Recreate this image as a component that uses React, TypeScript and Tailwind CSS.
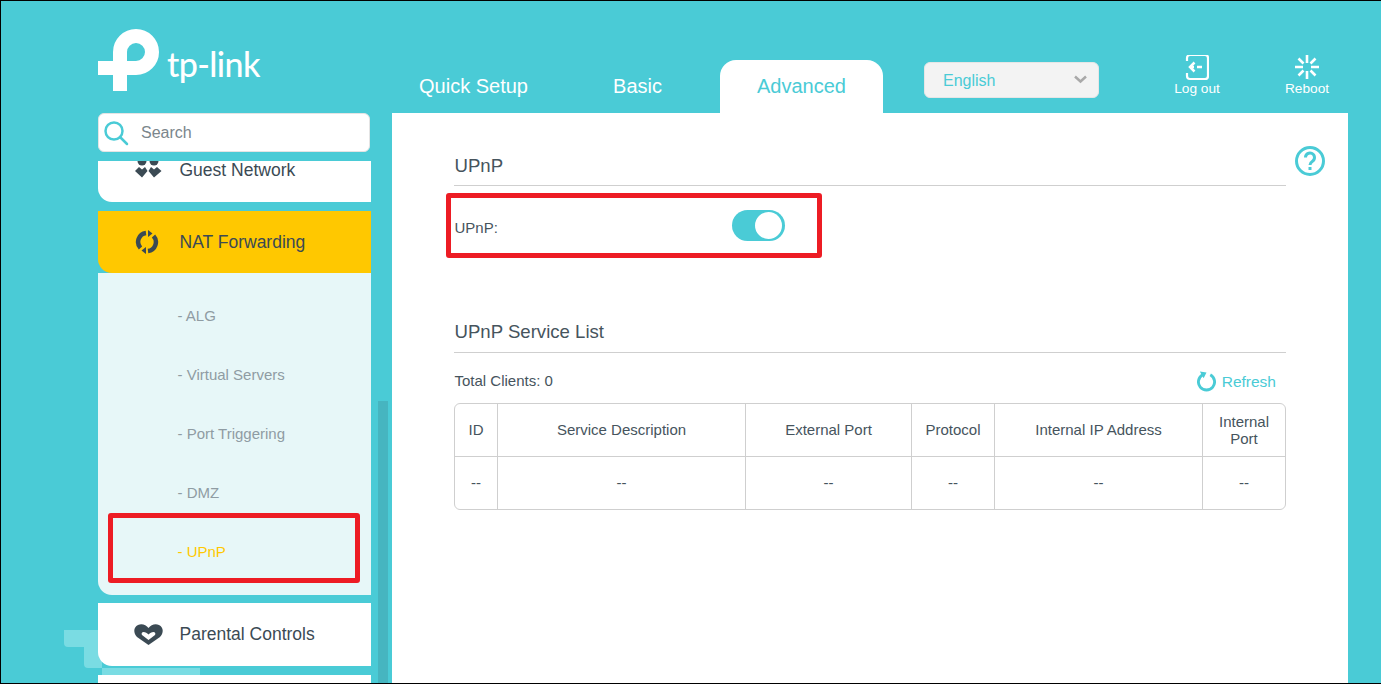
const font = { fontFamily: '"Liberation Sans", Arial, sans-serif' };

const Logo = () => (
  <div className="flex h-[112px] w-[293px] shrink-0 items-start pt-[27px]">
    <svg width="64" height="64" viewBox="98 28 64 64" fill="none" className="shrink-0">
      <path d="M120 91V52A16 16 0 1 1 136 68H98" stroke="#fff" strokeWidth="14" />
    </svg>
    <span className="mt-[16px] ml-[5px] text-[34px] leading-[40px] font-medium tracking-[-0.6px] text-white" style={{ fontFamily: 'Lato, sans-serif' }}>
      tp-link
    </span>
  </div>
);

const GuestIcon = () => (
  <svg width="28" height="17" viewBox="0 0 28 17" fill="#3b4a54">
    <circle cx="8" cy="0" r="4.500" />
    <circle cx="20" cy="0" r="4.500" />
    <path d="M1 10 5 6 8 8.500 11 6l2.500 4L8 16.500zM14.500 10 17 6l3 2.500L23 6l4.500 4-7.500 6.500z" />
  </svg>
);

const NatIcon = () => (
  <svg width="24" height="24" viewBox="0 0 24 24" fill="none" stroke="#3b4a54" strokeWidth="4.500">
    <path d="M5.500 18A9 9 0 0 1 11 3" />
    <path d="M18.500 6A9 9 0 0 1 13 21" />
    <path d="M13 0l4.500 3.500L13 7z" fill="#3b4a54" stroke="none" />
    <path d="M11 24l-4.500-3.500L11 17z" fill="#3b4a54" stroke="none" />
  </svg>
);

const HeartIcon = () => (
  <svg width="29" height="21" viewBox="0 0 29 21">
    <path d="M14.500 21 3 13C-1 9-.5 3 4 1c4-1.800 8 0 10.500 3C17 1 21-.8 25 1c4.500 2 5 8 1 12z" fill="#3b4a54" />
    <path d="M14.500 16 8 11c-1-1.500 0-3 1.500-3 2 0 3.500 1 5 2.500C16 9 17.500 8 19.500 8 21 8 22 9.500 21 11z" fill="#fff" />
  </svg>
);

const Sidebar = () => (
  <div className="relative z-10 flex w-[273px] flex-col">
    <div className="flex h-[39px] w-[272px] items-center rounded-md border border-[#e4e4e4] bg-white">
      <svg width="26" height="26" viewBox="0 0 26 26" fill="none" stroke="#4acbd6" strokeWidth="2.500" className="ml-[4px]">
        <circle cx="11" cy="11" r="8.500" />
        <path d="M17 17l7 7" strokeLinecap="round" />
      </svg>
      <span className="ml-[12px] text-[16px] text-[#7b868c]">Search</span>
    </div>
    <div className="mt-[9px] flex h-[41px] items-start overflow-hidden rounded-bl-[14px] bg-white text-[17.500px] leading-[18px] text-[#3b4a54]">
      <span className="ml-[36px] w-[45.500px]"><GuestIcon /></span>
      <span>Guest Network</span>
    </div>
    <div className="mt-[9px] flex h-[62px] items-center rounded-bl-[14px] bg-[#ffc800] text-[17.500px] text-[#3b4a54]">
      <span className="ml-[37px] flex w-[44.500px]"><NatIcon /></span>
      <span>NAT Forwarding</span>
    </div>
    <div className="flex h-[322px] flex-col rounded-bl-[14px] bg-[#e7f7f8] pt-[14px] pl-[79.500px] text-[15px] text-[#8f9ca3]">
      <div className="flex h-[59px] items-center">- ALG</div>
      <div className="flex h-[59px] items-center">- Virtual Servers</div>
      <div className="flex h-[59px] items-center">- Port Triggering</div>
      <div className="flex h-[59px] items-center">- DMZ</div>
      <div className="flex h-[58px] items-center text-[#ffc800]">- UPnP</div>
    </div>
    <div className="mt-[8px] flex h-[63px] items-center rounded-bl-[14px] bg-white text-[17.500px] text-[#3b4a54]">
      <span className="ml-[36px] flex w-[45.500px]"><HeartIcon /></span>
      <span>Parental Controls</span>
    </div>
    <div className="mt-[9px] h-[20px] bg-white" />
    <div className="absolute top-[288px] left-[280px] h-[290px] w-[10px] bg-[#46b5c0]" />
    <div className="absolute top-[400px] left-[10px] h-[70px] w-[252px] rounded-[3px] border-[5px] border-[#ed1c24]" />
  </div>
);

const Tabs = () => (
  <div className="flex h-[112px] items-end">
    <div className="flex h-[53px] w-[163px] items-center justify-center text-[20px] text-white">Quick Setup</div>
    <div className="flex h-[53px] w-[165px] items-center justify-center text-[20px] text-white">Basic</div>
    <div className="flex h-[53px] w-[163px] items-center justify-center rounded-t-[16px] bg-white text-[20px] text-[#4acbd6]">Advanced</div>
    <div className="mb-[15px] ml-[41px] flex h-[36px] w-[175px] items-center justify-between rounded-md border border-[#e6e6e6] bg-[#f3f3f3] pr-[11px] pl-[18px] text-[16px] text-[#4acbd6]">
      <span className="pt-[3px]">English</span>
      <svg width="13" height="9" viewBox="0 0 13 9" fill="none" stroke="#a9a9a9" strokeWidth="2.500">
        <path d="M1 1.500l5.500 5 5.500-5" />
      </svg>
    </div>
    <div className="mb-[16px] ml-[75px] flex w-[46px] flex-col items-center text-[13.700px] leading-[16px] whitespace-nowrap text-white">
      <svg width="24" height="26" viewBox="0 1 24 26" fill="none" stroke="#fff" strokeWidth="2.200">
        <path d="M2 7V4a3 3 0 0 1 3-3h15a3 3 0 0 1 3 3v18a3 3 0 0 1-3 3H5a3 3 0 0 1-3-3v-3" />
        <path d="M9.500 8.500 5 13l4.500 4.500" strokeWidth="2.500" />
        <path d="M6 13h3M12 13h5" strokeWidth="2.500" />
      </svg>
      Log out
    </div>
    <div className="mb-[16px] ml-[64px] flex w-[46px] flex-col items-center text-[13.700px] leading-[16px] whitespace-nowrap text-white">
      <svg width="26" height="26" viewBox="0 1 26 26" fill="none" stroke="#fff" strokeWidth="2.600">
        <path d="M13 1v8M13 17v8M1 13h8M17 13h8M4.500 4.500l5 5M16.500 16.500l5 5M21.500 4.500l-5 5M9.500 16.500l-5 5" />
      </svg>
      Reboot
    </div>
  </div>
);

const columns = [
  { label: 'ID', width: 'w-[43px]' },
  { label: 'Service Description', width: 'w-[248px]' },
  { label: 'External Port', width: 'w-[166px]' },
  { label: 'Protocol', width: 'w-[83px]' },
  { label: 'Internal IP Address', width: 'w-[208px]' },
  { label: 'Internal Port', width: 'w-[82px]' },
];

const ServiceTable = () => (
  <div className="mt-[12px] overflow-hidden rounded-md border border-[#cfcfcf] text-[15px] text-[#46545d]">
    <div className="flex h-[53px] border-b border-[#cfcfcf]">
      {columns.map((c, i) => (
        <div key={c.label} className={`flex items-center justify-center px-[8px] text-center leading-[17px] ${c.width} ${i < 5 ? 'border-r border-[#cfcfcf]' : ''}`}>
          {c.label}
        </div>
      ))}
    </div>
    <div className="flex h-[52px]">
      {columns.map((c, i) => (
        <div key={c.label} className={`flex items-center justify-center ${c.width} ${i < 5 ? 'border-r border-[#cfcfcf]' : ''}`}>
          --
        </div>
      ))}
    </div>
  </div>
);

const Main = () => (
  <div className="relative h-[571px] w-[956px] bg-white pt-[41px] pl-[62px] text-[#46545d]">
    <div className="w-[832px]">
      <div className="border-b border-[#cfcfcf] pb-[7px] pl-[0.500px] text-[18.600px] leading-[24px]">UPnP</div>
      <div className="relative mt-[24px] flex h-[32px] items-center pl-[0.500px] text-[15px]">
        <span className="w-[277.500px] pt-[5px]">UPnP:</span>
        <div className="flex h-[31px] w-[53px] items-center justify-end rounded-full bg-[#4acbd6] pr-[3px]">
          <div className="h-[27px] w-[27px] rounded-full bg-white" />
        </div>
        <div className="absolute top-[-17px] left-[-8px] h-[65px] w-[376px] rounded-[3px] border-[5px] border-[#ed1c24]" />
      </div>
      <div className="mt-[78px] border-b border-[#cfcfcf] pb-[8px] pl-[0.500px] text-[18.600px] leading-[24px]">UPnP Service List</div>
      <div className="mt-[18px] flex h-[20px] items-center justify-between pr-[10px] pl-[0.500px] text-[15px]">
        Total Clients: 0
        <span className="flex items-center text-[15.500px] text-[#4acbd6]">
          <svg width="19" height="22" viewBox="0 0 20 22" fill="none" stroke="#4acbd6" strokeWidth="3" className="mr-[6px]">
            <path d="M6 4.500a8.500 8.500 0 1 0 8 0" />
            <path d="M3 1l7 1-3 6z" fill="#4acbd6" stroke="none" />
          </svg>
          <span className="pt-[1px]">Refresh</span>
        </span>
      </div>
      <ServiceTable />
    </div>
    <div className="absolute top-[33px] left-[903px]">
      <svg width="30" height="30" viewBox="0 0 30 30" fill="none" stroke="#4acbd6" strokeWidth="3">
        <circle cx="15" cy="15" r="13.500" />
        <path d="M10.500 11.500a4.500 4.500 0 1 1 7 3.700c-1.500 1-2.500 1.800-2.500 3.800" />
        <path d="M15 21v3" />
      </svg>
    </div>
  </div>
);

export default function App() {
  return (
    <div className="relative h-[684px] w-[1381px] overflow-hidden border-y border-l border-black bg-[#4acbd6]" style={font}>
      <svg width="136" height="54" viewBox="0 0 136 54" fill="#7adce3" className="absolute top-[629px] left-[63px]">
        <path d="M0 0H38V38H136V46H38V38H24a4 4 0 0 1-4-4V17H4a4 4 0 0 1-4-4z" />
      </svg>
      <div className="relative flex h-full pl-[97px]">
        <div className="flex w-[294px] shrink-0 flex-col">
          <Logo />
          <Sidebar />
        </div>
        <div className="flex flex-col">
          <Tabs />
          <Main />
        </div>
      </div>
    </div>
  );
}
